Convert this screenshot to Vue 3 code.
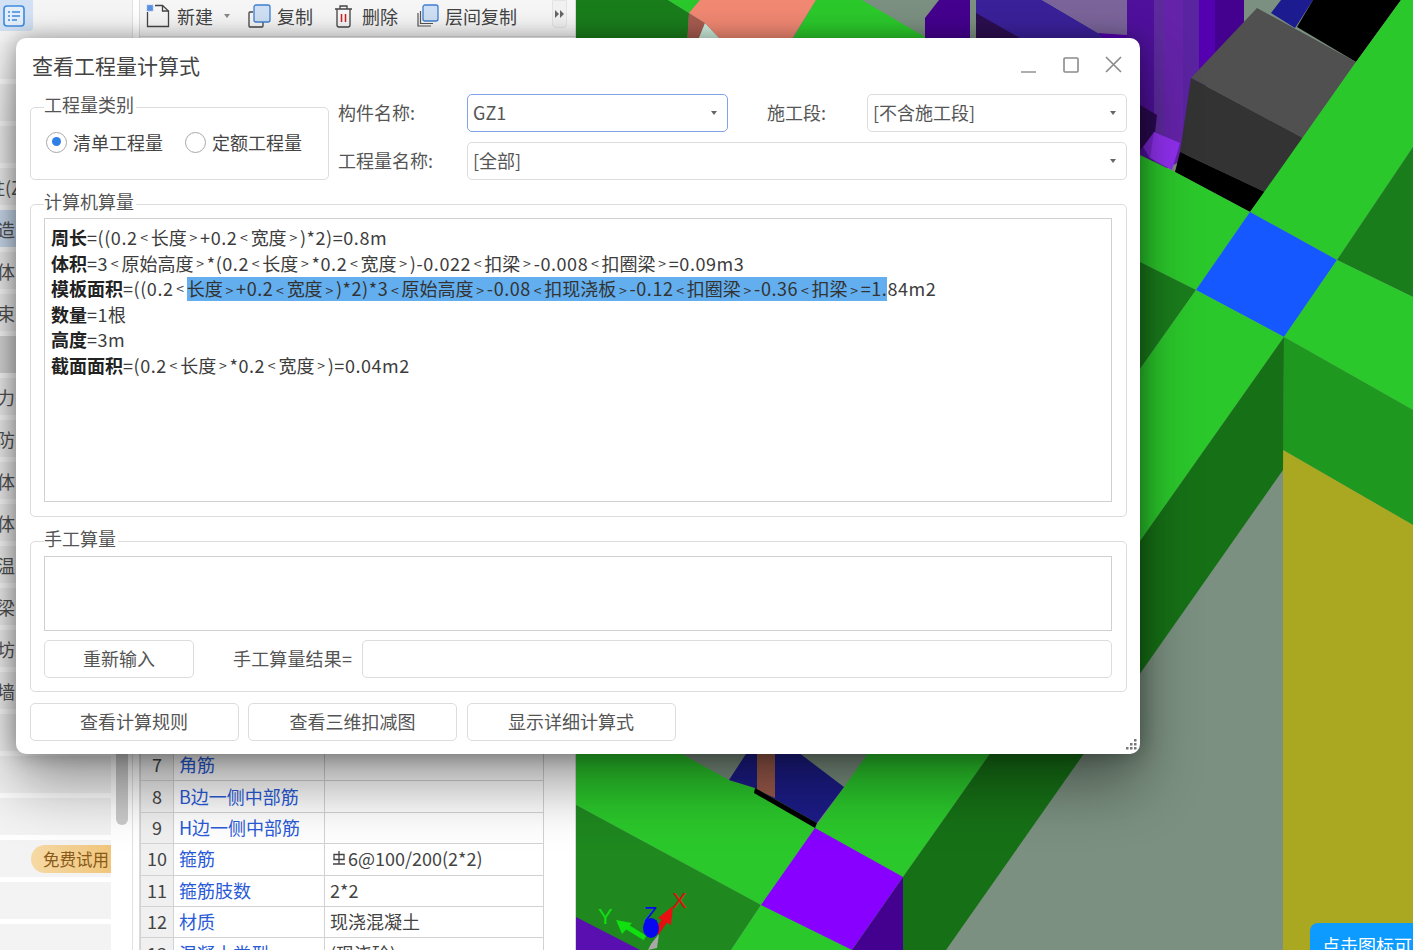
<template>
  <div class="app">
    <!-- left list -->
    <aside class="nav">
      <div class="nav-top">
        <div class="nav-btn">
          <svg width="24" height="24" viewBox="0 0 24 24" fill="none" stroke="#3f8ae0" stroke-width="1.6">
            <rect x="2" y="2" width="20" height="20" rx="3" fill="#e4effa" />
            <path d="M6 8h2M10 8h8M6 12h2M10 12h8M6 16h2M10 16h5" />
          </svg>
        </div>
      </div>
      <div class="nav-body">
        <ul class="nav-list">
          <li
            v-for="(row, i) in navRows"
            :key="i"
            class="nav-row"
            :class="row.cls"
          >
            <span v-if="row.pill" class="pill">免费试用</span>
            <span v-else class="nav-text" :class="{ long: row.text.length > 1 }">{{ row.text }}</span>
          </li>
        </ul>
        <div class="thumb"></div>
      </div>
    </aside>

    <!-- property panel -->
    <section class="panel">
      <div class="toolbar">
        <button class="tool tool-new">
          <svg width="25" height="24" viewBox="0 0 25 24" fill="none" stroke="#444" stroke-width="1.3">
            <path d="M1.5 8v14.5h21V7l-6-5.5H9" />
            <path d="M16.500 1.500V7h6" />
            <rect x="1" y="1" width="6" height="6" fill="#5b8fe0" stroke="#9cc0f0" stroke-width="1" stroke-dasharray="1.500 1" />
          </svg>
          <span>新建</span>
          <i class="caret"></i>
        </button>
        <button class="tool tool-copy">
          <svg width="23" height="24" viewBox="0 0 23 24" fill="none">
            <path d="M5 8H2a1 1 0 0 0-1 1v13a1 1 0 0 0 1 1h12a1 1 0 0 0 1-1v-4" stroke="#444" stroke-width="1.3" />
            <rect x="6" y="1" width="16" height="17" rx="2" fill="#cfe0f5" stroke="#3f7fd0" stroke-width="1.300" />
          </svg>
          <span>复制</span>
        </button>
        <button class="tool tool-del">
          <svg width="19" height="24" viewBox="0 0 19 24" fill="none" stroke="#444" stroke-width="1.3">
            <path d="M1 5h17M6 5V2h7v3M3 5v16a2 2 0 0 0 2 2h9a2 2 0 0 0 2-2V5" />
            <path d="M7.500 10v8M11.500 10v8" stroke="#d02020" stroke-width="1.500" />
          </svg>
          <span>删除</span>
        </button>
        <button class="tool tool-layer">
          <svg width="23" height="24" viewBox="0 0 23 24" fill="none">
            <path d="M2 9v13h13M4.500 7v12.500H17" stroke="#555" stroke-width="1.200" />
            <rect x="7" y="1" width="15" height="16" rx="2" fill="#cfe0f5" stroke="#3f7fd0" stroke-width="1.300" />
          </svg>
          <span>层间复制</span>
        </button>
        <button class="more">
          <svg width="9" height="8" viewBox="0 0 9 8" fill="#666"><path d="M0 0l4 4-4 4zM5 0l4 4-4 4z" /></svg>
        </button>
      </div>

      <div class="prop-wrap">
        <table class="prop-table">
          <tbody>
            <tr v-for="row in propRows" :key="row.no">
              <td class="c-no">{{ row.no }}</td>
              <td class="c-name">{{ row.name }}</td>
              <td class="c-val">
                <svg v-if="row.steel" class="steel" width="14" height="15" viewBox="0 0 14 15" fill="none" stroke="#444" stroke-width="1.300">
                  <path d="M7 0v13M2 3.500h10v5H2zM1 13h12" />
                </svg>{{ row.value }}
              </td>
            </tr>
          </tbody>
        </table>
      </div>
    </section>

    <!-- 3d view -->
    <main class="view">
      <svg class="scene" viewBox="576 0 837 950" width="837" height="950">
        <rect x="576" y="0" width="837" height="950" fill="#7b9080" />
        <polygon v-for="(p, i) in polys" :key="i" :points="p[0]" :fill="p[1]" />
        <!-- axis -->
        <polygon points="651,944 659,934 657,948 648,950" fill="#a8a8a8" />
        <path d="M645 938L624 925" stroke="#10e010" stroke-width="5" />
        <polygon points="616,920 632,923 622,934" fill="#10e010" />
        <path d="M656 933L668 916" stroke="#e01010" stroke-width="6" />
        <polygon points="673,906 671,925 658,918" fill="#e81010" />
        <ellipse cx="651" cy="928" rx="8" ry="10" fill="#0808f0" />
        <text class="ax" x="598" y="924" fill="#10e010">Y</text>
        <text class="ax" x="644" y="922" fill="#0808f0">Z</text>
        <text class="ax" x="672" y="908" fill="#e01010">X</text>
      </svg>
      <div class="tip">点击图标可查看</div>
    </main>

    <!-- dialog -->
    <div class="dialog">
      <header class="dlg-head">
        <h1>查看工程量计算式</h1>
        <div class="win-btns">
          <svg width="16" height="16" viewBox="0 0 16 16" stroke="#8a8a8a" stroke-width="1.400" fill="none"><path d="M0 15h15" /></svg>
          <svg width="16" height="16" viewBox="0 0 16 16" stroke="#8a8a8a" stroke-width="1.600" fill="none"><rect x="1" y="1" width="14" height="14" rx="1" /></svg>
          <svg width="17" height="17" viewBox="0 0 17 17" stroke="#8a8a8a" stroke-width="1.600" fill="none"><path d="M1 1l15 15M16 1L1 16" /></svg>
        </div>
      </header>

      <div class="dlg-body">
        <div class="top-row">
          <div class="group kind-group">
            <span class="legend">工程量类别</span>
            <label class="radio"><i class="dot on"></i>清单工程量</label>
            <label class="radio"><i class="dot"></i>定额工程量</label>
          </div>
          <div class="fields">
            <span class="f-label">构件名称:</span>
            <div class="select focus"><span>GZ1</span><i class="arrow"></i></div>
            <span class="f-label f-mid">施工段:</span>
            <div class="select"><span>[不含施工段]</span><i class="arrow"></i></div>
            <span class="f-label">工程量名称:</span>
            <div class="select wide"><span>[全部]</span><i class="arrow"></i></div>
          </div>
        </div>

        <div class="group calc-group">
          <span class="legend">计算机算量</span>
          <div class="box formula">
            <div v-for="line in formulas" :key="line.label" class="f-line">
              <b>{{ line.label }}</b>
              <span v-for="(t, i) in tokens(line.before)" :key="'b' + i" :class="t.c">{{ t.s }}</span>
              <span v-if="line.sel" class="sel"><span v-for="(t, i) in tokens(line.sel)" :key="'s' + i" :class="t.c">{{ t.s }}</span></span>
              <span v-for="(t, i) in tokens(line.after || '')" :key="'a' + i" :class="t.c">{{ t.s }}</span>
            </div>
          </div>
        </div>

        <div class="group manual-group">
          <span class="legend">手工算量</span>
          <div class="box manual"></div>
          <div class="manual-row">
            <button class="btn redo">重新输入</button>
            <span class="m-label">手工算量结果=</span>
            <div class="m-input"></div>
          </div>
        </div>

        <div class="actions">
          <button class="btn act">查看计算规则</button>
          <button class="btn act">查看三维扣减图</button>
          <button class="btn act">显示详细计算式</button>
        </div>
      </div>

      <svg class="grip" width="12" height="12" viewBox="0 0 12 12" fill="#777">
        <rect x="9" y="0" width="2.500" height="2.500" />
        <rect x="5" y="4" width="2.500" height="2.500" />
        <rect x="9" y="4" width="2.500" height="2.500" />
        <rect x="1" y="8" width="2.500" height="2.500" />
        <rect x="5" y="8" width="2.500" height="2.500" />
        <rect x="9" y="8" width="2.500" height="2.500" />
      </svg>
    </div>
  </div>
</template>

<script setup>
// 左侧列表，只露出对话框左边的一小截
const navRows = [
  { text: "" }, { text: "" }, { text: "" },
  { text: "柱(Z" },
  { text: "造", cls: "active" },
  { text: "体" },
  { text: "束" },
  { text: "", cls: "dim" },
  { text: "力" },
  { text: "防" },
  { text: "体" },
  { text: "体" },
  { text: "温" },
  { text: "梁" },
  { text: "坊" },
  { text: "墙" },
  { text: "" }, { text: "" }, { text: "" },
  { pill: true },
  { text: "" }, { text: "" },
];

const propRows = [
  { no: 7, name: "角筋", value: "" },
  { no: 8, name: "B边一侧中部筋", value: "" },
  { no: 9, name: "H边一侧中部筋", value: "" },
  { no: 10, name: "箍筋", value: "6@100/200(2*2)", steel: true },
  { no: 11, name: "箍筋肢数", value: "2*2" },
  { no: 12, name: "材质", value: "现浇混凝土" },
  { no: 13, name: "混凝土类型", value: "(现浇砼)" },
];

const formulas = [
  { label: "周长", before: "=((0.2<长度>+0.2<宽度>)*2)=0.8m" },
  { label: "体积", before: "=3<原始高度>*(0.2<长度>*0.2<宽度>)-0.022<扣梁>-0.008<扣圈梁>=0.09m3" },
  {
    label: "模板面积",
    before: "=((0.2<",
    sel: "长度>+0.2<宽度>)*2)*3<原始高度>-0.08<扣现浇板>-0.12<扣圈梁>-0.36<扣梁>=1.",
    after: "84m2",
  },
  { label: "数量", before: "=1根" },
  { label: "高度", before: "=3m" },
  { label: "截面面积", before: "=(0.2<长度>*0.2<宽度>)=0.04m2" },
];

// 原图字体的尖括号更宽，数字也略松，这里把文字拆开分别处理
function tokens(str) {
  return str
    .split(/([<>]|[\x21-\x3b\x3d\x3f-\x7e]+)/)
    .filter(Boolean)
    .map((s) => {
      if (s === "<" || s === ">") return { s, c: "ang" };
      if (/^[\x21-\x7e]/.test(s)) return { s, c: "asc" };
      return { s, c: "" };
    });
}

// 三维视图里的色块 [points, fill]
const polys = [
  // top strip
  ["576,0 668,0 689,13 686,60 576,60", "#1a7d1c"],
  ["668,0 700,0 689,13", "#2bc82b"],
  ["689,13 705,23 690,60 686,60", "#a85c50"],
  ["705,23 740,60 690,60", "#cdeedd"],
  ["700,0 816,0 793,37 780,60 740,60 705,23 689,13", "#f08872"],
  ["816,0 862,0 925,37 925,60 780,60", "#2bc82b"],
  ["925,18 939,0 970,0 970,60 925,60", "#44008e"],
  ["976,0 1042,0 1127,50 1127,60 976,60", "#3a2199"],
  ["976,13 1018,37 1040,60 976,60", "#2c0f50"],
  ["1042,0 1127,0 1127,35 1098,33", "#7a6499"],
  ["1098,33 1127,35 1127,60", "#5500b0"],
  // purple column
  ["1127,0 1154,0 1154,170 1127,170", "#4f119c"],
  ["1154,0 1164,0 1164,170 1154,170", "#5c2a9c"],
  ["1164,0 1183,0 1183,160 1164,170", "#6423a8"],
  ["1183,0 1199,0 1199,120 1183,160", "#5a23a0"],
  ["1199,0 1215,0 1215,68 1199,100", "#5500b0"],
  ["1215,0 1244,0 1244,27 1215,68", "#44008e"],
  ["1140,105 1157,115 1155,132 1143,147 1140,150", "#2a0a50"],
  ["1143,147 1154,132 1162,136 1150,158", "#7a25d0"],
  ["1154,132 1180,143 1172,170 1150,158", "#9030ee"],
  // blocks at the top right
  ["1271,13 1281,0 1313,0 1295,28", "#1c1c90"],
  ["1297,27 1313,0 1401,0 1356,62", "#000000"],
  ["1257,8 1356,62 1303,138 1191,78", "#505050"],
  ["1191,78 1303,138 1265,192 1180,152", "#333333"],
  ["1180,152 1265,192 1250,212 1175,172", "#000000"],
  // greens around the blue tile
  ["1401,0 1413,0 1413,147 1337,260 1250,212 1356,62", "#2bc82b"],
  ["1413,147 1413,297 1337,260", "#1a7d1c"],
  ["1140,155 1175,172 1250,212 1196,290 1140,262", "#2bc82b"],
  ["1140,262 1196,290 1140,369", "#1a7d1c"],
  ["1250,212 1337,260 1284,337 1196,290", "#1558ff"],
  // long bands
  ["1337,260 1413,297 1413,410 1284,337", "#2bc82b"],
  ["1284,337 1413,410 1413,525 1283,450", "#1f981f"],
  ["1283,450 1413,525 1413,950 1283,950", "#aaa820"],
  ["1196,290 1284,337 903,877 815,828", "#2bc82b"],
  ["1284,337 1283,470 946,950 903,950 903,877", "#167116"],
  ["815,828 903,877 903,950 852,950 761,905", "#2bc82b"],
  // lower left
  ["680,753 729,780 755,788 817,823 815,828 761,905 576,805 576,700 680,700", "#2bc82b"],
  ["576,805 761,905 731,950 576,950", "#1f881f"],
  ["576,917 640,950 576,950", "#5a0fb0"],
  ["761,905 852,950 731,950", "#2bc82b"],
  ["729,780 755,740 782,740 844,787 817,823 755,788", "#1c1c88"],
  ["757,740 775,740 775,798 757,790", "#9a5a4a"],
  ["755,788 817,823 815,828 754,793", "#000000"],
  // purple tile
  ["815,828 903,877 852,950 761,905", "#8800ff"],
  ["903,877 903,950 852,950", "#44008e"],
];
</script>

<style scoped>
.app {
  display: flex;
  position: relative;
  width: 1413px;
  height: 950px;
  overflow: hidden;
  background: #fff;
  font-family: "Noto Sans CJK SC", "Liberation Sans", sans-serif;
  font-size: 18px;
  color: #444;
}

button {
  font: inherit;
  color: inherit;
  background: none;
  border: 0;
  padding: 0;
}

/* nav */
.nav {
  width: 133px;
  flex: none;
  background: #fff;
  border-right: 1px solid #e2e2e2;
  box-sizing: border-box;
}

.nav-top {
  height: 42px;
  background: #f5f5f5;
}

.nav-btn {
  width: 33px;
  height: 31px;
  display: flex;
  align-items: center;
  justify-content: center;
  padding-right: 5px;
  box-sizing: border-box;
  background: #d2e2f4;
  border-radius: 0 0 4px 0;
}

.nav-body {
  display: flex;
  gap: 5px;
}

.nav-list {
  list-style: none;
  margin: 0;
  padding: 0;
  width: 111px;
  display: flex;
  flex-direction: column;
  gap: 5px;
}

.nav-row {
  height: 37px;
  display: flex;
  align-items: center;
  background: #f3f3f3;
  overflow: hidden;
  white-space: nowrap;
}

.nav-row.active {
  background: #cfe0f4;
}

.nav-row.dim {
  background: #dcdcdc;
}

.nav-text {
  margin-left: -3px;
  color: #555;
}

.nav-text.long {
  margin-left: -13px;
}

.pill {
  margin-left: 31px;
  width: 80px;
  height: 28px;
  line-height: 28px;
  box-sizing: border-box;
  padding-left: 12px;
  font-size: 16.500px;
  color: #8a5a1a;
  background: linear-gradient(90deg, #f6d9a4, #f0c67c);
  border-radius: 14px 0 0 14px;
}

.thumb {
  width: 12px;
  height: 783px;
  background: #cbcbcb;
  border-radius: 0 0 6px 6px;
}

/* panel */
.panel {
  width: 443px;
  flex: none;
  box-sizing: border-box;
  padding-left: 6px;
  background: #fff;
  border-right: 1px solid #d8d8d8;
}

.toolbar {
  height: 37px;
  display: flex;
  align-items: flex-start;
  padding: 4px 0 0 6px;
  box-sizing: border-box;
  background: #f6f6f6;
  border-left: 1px solid #dcdcdc;
  border-bottom: 1px solid #ddd;
}

.tool {
  display: flex;
  align-items: center;
  height: 24px;
  color: #444;
  white-space: nowrap;
}

.tool svg {
  margin-right: 6px;
  flex: none;
}

.tool-new { width: 102px; }
.tool-copy { width: 86px; }
.tool-del { width: 82px; }
.tool-del svg { margin-right: 9px; }
.tool-layer { width: 136px; }

.caret {
  margin-left: 11px;
  border: 3px solid transparent;
  border-top: 4px solid #888;
  border-bottom: 0;
}

.more {
  margin-top: -4px;
  width: 15px;
  height: 28px;
  display: flex;
  align-items: center;
  justify-content: center;
  background: #f2f2f2;
  border: 1px solid #e4e4e4;
  border-radius: 0 0 4px 4px;
  box-sizing: border-box;
}

.prop-wrap {
  padding-top: 712px;
  border-left: 1px solid #dcdcdc;
  height: 913px;
  box-sizing: border-box;
  overflow: hidden;
}

.prop-table {
  width: 404px;
  border-collapse: collapse;
  table-layout: fixed;
  margin-left: 0;
}

.prop-table td {
  height: 28.400px;
  padding: 0 0 2px;
  box-sizing: content-box;
  border: 1px solid #d2d2d2;
  line-height: 22px;
  white-space: nowrap;
}

.c-no {
  width: 32px;
  text-align: center;
  background: #f0f0f0;
  color: #444;
}

.c-name {
  width: 145px;
  padding-left: 5px !important;
  color: #2a5bd7;
}

.c-val {
  padding-left: 5px !important;
  color: #444;
}

.steel {
  margin: 0 2px 0 2px;
  vertical-align: 0;
}

/* view */
.view {
  position: relative;
  flex: 1;
  overflow: hidden;
}

.scene {
  display: block;
}

.ax {
  font-family: "Liberation Sans", sans-serif;
  font-size: 22px;
}

.tip {
  position: absolute;
  left: 734px;
  top: 923px;
  width: 140px;
  height: 40px;
  padding: 9px 0 0 12px;
  box-sizing: border-box;
  background: #0d9bff;
  color: #fff;
  white-space: nowrap;
  border-radius: 8px 0 0 0;
}

/* dialog */
.dialog {
  position: absolute;
  left: 16px;
  top: 38px;
  width: 1124px;
  height: 716px;
  box-sizing: border-box;
  background: #fff;
  border-radius: 10px;
  box-shadow: 0 30px 60px rgba(0, 0, 0, 0.4), 0 0 22px rgba(0, 0, 0, 0.35);
}

.dlg-head {
  height: 56px;
  display: flex;
  align-items: center;
  justify-content: space-between;
  padding: 0 18px 2px 16px;
  box-sizing: border-box;
}

.dlg-head h1 {
  margin: 0;
  font-size: 21px;
  font-weight: 400;
  color: #444;
}

.win-btns {
  display: flex;
  align-items: center;
  gap: 26px;
  padding-bottom: 1px;
}

.dlg-body {
  padding: 0 13px 0 14px;
}

.top-row {
  display: flex;
  gap: 9px;
  height: 86px;
}

.group {
  position: relative;
  box-sizing: border-box;
  border: 1.5px solid #dcdcdc;
  border-radius: 5px;
}

.legend {
  position: absolute;
  left: 13px;
  top: -16px;
  line-height: 24px;
  padding-right: 2px;
  background: #fff;
  color: #555;
}

.kind-group {
  width: 299px;
  flex: none;
  height: 73px;
  margin-top: 13px;
  display: flex;
  gap: 22px;
  padding: 22px 0 0 15px;
}

.radio {
  display: flex;
  align-items: center;
  gap: 6px;
  height: 24px;
  color: #444;
}

.dot {
  position: relative;
  width: 21px;
  height: 21px;
  box-sizing: border-box;
  border: 1.5px solid #a8a8a8;
  border-radius: 50%;
  background: #fff;
}

.dot.on::after {
  content: "";
  position: absolute;
  left: 4.500px;
  top: 4.500px;
  width: 9px;
  height: 9px;
  border-radius: 50%;
  background: #2f7fe6;
}

.fields {
  flex: 1;
  display: grid;
  grid-template-columns: 129px 261px 139px 260px;
  grid-template-rows: 38px 38px;
  row-gap: 10px;
  align-items: center;
}

.f-label {
  color: #555;
  white-space: nowrap;
  padding-bottom: 2px;
}

.f-mid {
  padding-left: 39px;
}

.select {
  height: 38px;
  box-sizing: border-box;
  border: 1.5px solid #dcdcdc;
  border-radius: 5px;
  display: flex;
  align-items: center;
  justify-content: space-between;
  padding: 0 10px 0 5px;
  color: #555;
}

.select span {
  padding-bottom: 2px;
}

.select.focus {
  border-color: #7fa3e6;
}

.select.wide {
  grid-column: 2 / 5;
}

.arrow {
  border: 3.500px solid transparent;
  border-top: 4px solid #666;
  border-bottom: 0;
}

.calc-group {
  margin-top: 24px;
  height: 313px;
  padding: 13px 14px 14px 13px;
}

.box {
  box-sizing: border-box;
  border: 1.5px solid #d0d0d0;
  background: #fff;
}

.formula {
  height: 284px;
  padding: 6px 0 0 6px;
  color: #3c3c3c;
}

.f-line {
  display: flex;
  height: 25.500px;
  line-height: 25.500px;
  white-space: nowrap;
}

.f-line b {
  font-weight: 700;
  color: #222;
}

.asc {
  letter-spacing: 0.560px;
}

.ang {
  display: inline-block;
  width: 13.300px;
  text-align: center;
  font-size: 14px;
}

.sel {
  background: linear-gradient(#62aeee, #62aeee) 0 50% / 100% 24px no-repeat;
  color: #333;
}

.manual-group {
  margin-top: 24px;
  height: 151px;
  padding: 14px 14px 0 13px;
}

.manual {
  height: 75px;
}

.manual-row {
  display: flex;
  align-items: center;
  margin-top: 9px;
}

.btn {
  box-sizing: border-box;
  height: 38px;
  padding-bottom: 2px;
  border: 1.5px solid #dcdcdc;
  border-radius: 5px;
  background: #fff;
  color: #555;
}

.redo {
  width: 150px;
  flex: none;
}

.m-label {
  margin-left: 39px;
  width: 129px;
  flex: none;
  padding-bottom: 2px;
  color: #555;
  letter-spacing: 0.150px;
}

.m-input {
  flex: 1;
  height: 38px;
  box-sizing: border-box;
  border: 1.5px solid #dcdcdc;
  border-radius: 5px;
}

.actions {
  display: flex;
  gap: 9.500px;
  margin: 11px 0 0 -0.500px;
}

.act {
  width: 209px;
}

.grip {
  position: absolute;
  right: 3px;
  bottom: 3px;
}
</style>
